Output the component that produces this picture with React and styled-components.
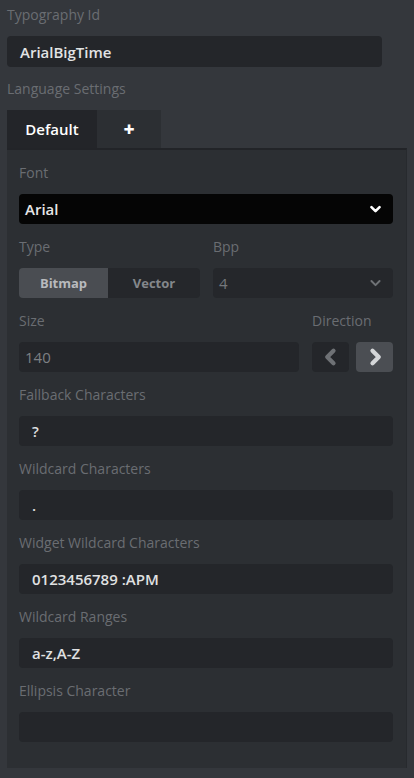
import React from "react";
import styled, { createGlobalStyle } from "styled-components";

const GlobalStyle = createGlobalStyle`
  html, body {
    margin: 0;
    padding: 0;
    background: #34373c;
  }
  body {
    font-family: "Open Sans", "Noto Sans", sans-serif;
  }
`;

const Chevron = ({ dir = "down", size = 12, color = "#fff", weight = 3 }) => {
  const pts = {
    down: "3,5 8,10 13,5",
    left: "10,3 5,8 10,13",
    right: "6,3 11,8 6,13",
  }[dir];
  return (
    <svg width={size} height={size} viewBox="0 0 16 16">
      <polyline
        points={pts}
        fill="none"
        stroke={color}
        strokeWidth={weight}
        strokeLinecap="round"
        strokeLinejoin="round"
      />
    </svg>
  );
};

const App = () => {
  return (
    <>
      <GlobalStyle />
      <Page>
        <Label first>Typography Id</Label>
        <TopInput>ArialBigTime</TopInput>
        <Label tight>Language Settings</Label>

        <Tabs>
          <Tab active>Default</Tab>
          <Tab wide>+</Tab>
        </Tabs>

        <Panel>
          <Field>
            <Label>Font</Label>
            <Select dark>
              <span>Arial</span>
              <Chevron dir="down" size={13} color="#ffffff" weight={3.2} />
            </Select>
          </Field>

          <TwoCol>
            <Field>
              <Label>Type</Label>
              <Segmented>
                <Segment active>Bitmap</Segment>
                <Segment>Vector</Segment>
              </Segmented>
            </Field>
            <Field>
              <Label>Bpp</Label>
              <Select muted>
                <span>4</span>
                <Chevron dir="down" size={13} color="#6f7276" weight={2.4} />
              </Select>
            </Field>
          </TwoCol>

          <SizeRow>
            <Field>
              <Label>Size</Label>
              <Input muted>140</Input>
            </Field>
            <Field>
              <Label>Direction</Label>
              <DirButtons>
                <DirButton>
                  <Chevron dir="left" size={20} color="#6e7175" weight={3.4} />
                </DirButton>
                <DirButton active>
                  <Chevron dir="right" size={20} color="#d4d6d8" weight={3.4} />
                </DirButton>
              </DirButtons>
            </Field>
          </SizeRow>

          <Field>
            <Label>Fallback Characters</Label>
            <Input indent>?</Input>
          </Field>
          <Field>
            <Label>Wildcard Characters</Label>
            <Input indent>.</Input>
          </Field>
          <Field>
            <Label>Widget Wildcard Characters</Label>
            <Input indent>0123456789 :APM</Input>
          </Field>
          <Field>
            <Label>Wildcard Ranges</Label>
            <Input indent>a-z,A-Z</Input>
          </Field>
          <Field>
            <Label>Ellipsis Character</Label>
            <Input indent />
          </Field>
        </Panel>
      </Page>
    </>
  );
};

export default App;

const Page = styled.div`
  width: 414px;
  height: 778px;
  box-sizing: border-box;
  padding: 0 7px;
  background: #34373c;
  display: flex;
  flex-direction: column;
`;

const Label = styled.div`
  font-size: 14px;
  line-height: 20px;
  color: #6a6d72;
  padding: ${(p) =>
    p.first ? "5px 0 11px" : p.tight ? "12px 0 11px" : "13px 0 11px"};
  white-space: nowrap;
`;

const TopInput = styled.div`
  width: 375px;
  height: 31px;
  box-sizing: border-box;
  background: #24262a;
  border-radius: 4px;
  padding: 0 13px;
  display: flex;
  align-items: center;
  color: #e2e3e4;
  font-size: 15px;
  font-weight: 600;
`;

const Tabs = styled.div`
  display: flex;
  height: 38px;
`;

const Tab = styled.div`
  width: ${(p) => (p.wide ? "64px" : "90px")};
  display: flex;
  align-items: center;
  justify-content: center;
  background: ${(p) => (p.active ? "#232529" : "#2c2f33")};
  color: #ffffff;
  font-size: ${(p) => (p.wide ? "19px" : "15px")};
  font-weight: ${(p) => (p.wide ? 800 : 600)};
`;

const Panel = styled.div`
  width: 400px;
  box-sizing: border-box;
  background: #2c2f33;
  border-top: 2px solid #222428;
  border-right: 1px solid #272a2e;
  padding: 0 13px 26px 12px;
  display: flex;
  flex-direction: column;
`;

const Field = styled.div`
  display: flex;
  flex-direction: column;
  min-width: 0;
`;

const Select = styled.div`
  height: 30px;
  box-sizing: border-box;
  border-radius: 4px;
  background: ${(p) => (p.dark ? "#050505" : "#25272b")};
  display: flex;
  align-items: center;
  justify-content: space-between;
  padding: 0 11px 0 6px;
  color: ${(p) => (p.muted ? "#75787c" : "#e6e6e6")};
  font-size: 15px;
  font-weight: ${(p) => (p.muted ? 400 : 600)};

  svg {
    display: block;
  }
`;

const TwoCol = styled.div`
  display: grid;
  grid-template-columns: 181px 180px;
  column-gap: 13px;
`;

const Segmented = styled.div`
  display: grid;
  grid-template-columns: 89px 92px;
  height: 30px;
  border-radius: 4px;
  overflow: hidden;
`;

const Segment = styled.div`
  display: flex;
  align-items: center;
  justify-content: center;
  background: ${(p) => (p.active ? "#4a4d52" : "#25272b")};
  color: ${(p) => (p.active ? "#b8babd" : "#84878b")};
  font-size: 13px;
  font-weight: 700;
`;

const SizeRow = styled.div`
  display: grid;
  grid-template-columns: 280px 81px;
  column-gap: 13px;
`;

const DirButtons = styled.div`
  display: flex;
  gap: 7px;
  height: 30px;
`;

const DirButton = styled.div`
  width: 37px;
  border-radius: 4px;
  background: ${(p) => (p.active ? "#4b4e53" : "#24262a")};
  display: flex;
  align-items: center;
  justify-content: center;

  svg {
    display: block;
  }
`;

const Input = styled.div`
  height: 30px;
  box-sizing: border-box;
  border-radius: 4px;
  background: #24262a;
  display: flex;
  align-items: center;
  padding: 0 ${(p) => (p.indent ? "13px" : "6px")};
  color: ${(p) => (p.muted ? "#7d8084" : "#e0e1e2")};
  font-size: 15px;
  font-weight: ${(p) => (p.muted ? 400 : 600)};
  white-space: nowrap;
`;
